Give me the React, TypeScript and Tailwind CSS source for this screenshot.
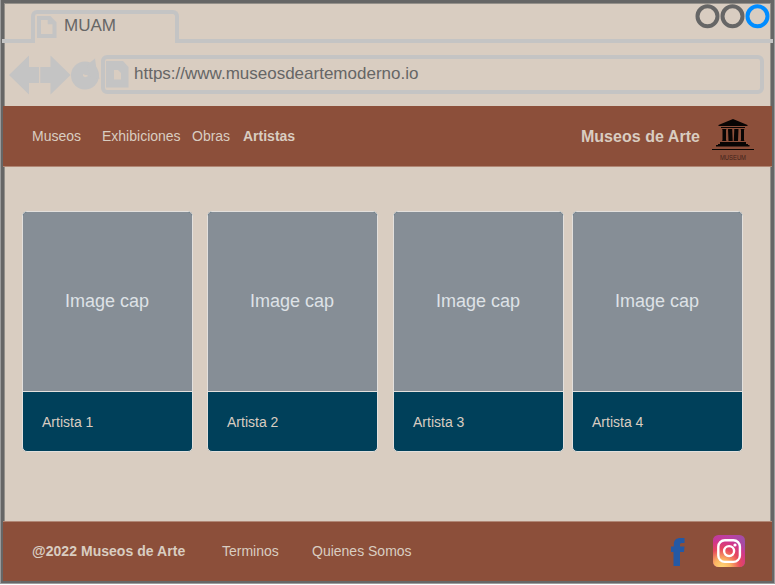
const artists = [
  { name: "Artista 1", gap: "" },
  { name: "Artista 2", gap: "ml-[14px]" },
  { name: "Artista 3", gap: "ml-[15px]" },
  { name: "Artista 4", gap: "ml-[8px]" },
];

function PageIcon() {
  return (
    <svg className="h-[24px] w-[20px] shrink-0" viewBox="0 0 20 24" fill="none" stroke="#c4c4c4" strokeWidth="4">
      <path d="M2 4H12.500L17.500 9V22H2Z" />
      <path d="M12 4V9H17" strokeWidth="2.500" />
    </svg>
  );
}

function NavArrows() {
  return (
    <svg className="h-[40px] w-[92px] shrink-0" viewBox="0 0 92 40" fill="#c4c4c4">
      <path d="M0 20 20 0.5V12H30V28H20V39.500Z" />
      <path d="M31.300 12H41.500V0.5L61.500 20 41.500 39.500V28H31.300Z" />
      <circle cx="76" cy="20.500" r="14" />
      <path d="M78 10 86 3.500 87.500 14 90.500 23.800 82 22Z" />
      <path d="M74 19V21L76 22.300 78.500 21.500V20H76.500Z" fill="#d9cdc1" />
    </svg>
  );
}

function Museum() {
  return (
    <svg className="h-[44px] w-[42px]" viewBox="0 0 42 44">
      <g fill="#080504">
        <path d="M21 1 35.500 7V8H6.500V7ZM9 9H33V10H9Z" />
        <path d="M10 11H14.500L14 12V22L14.500 23H10L10.500 22V12ZM16 11H20.200L20.700 23H16.500ZM22.300 11H26.500L26 23H21.800ZM28.500 11H32.500L32 12V22L32.500 23H28.500L29 22V12Z" />
        <path d="M8 24H34V26H36V27H37.500V28.500H4V27H6V26H8Z" />
        <path d="M0 31H42V32H0Z" />
      </g>
      <text x="21" y="41.800" textAnchor="middle" fontSize="6.800" textLength="26" lengthAdjust="spacingAndGlyphs" fill="#42241b" fontFamily="Liberation Sans, sans-serif">
        MUSEUM
      </text>
    </svg>
  );
}

function Facebook() {
  return (
    <svg className="h-[28px] w-[14px]" viewBox="0 0 14 28" fill="#2459a4">
      <path d="M2.500 28V14H0V8.500H2.800V6.500C2.800 2 5.500 0 9.500 0H13.500V5H11C9.400 5 9 5.800 9 7V8.500H13.500L13 14H9V28Z" />
    </svg>
  );
}

function Instagram() {
  return (
    <svg className="h-[32px] w-[32px]" viewBox="0 0 32 32">
      <defs>
        <linearGradient id="igBase" x1="0" y1="0" x2="1" y2="0.35">
          <stop offset="0" stopColor="#c23a9a" />
          <stop offset="0.5" stopColor="#b943a5" />
          <stop offset="1" stopColor="#9c50a5" />
        </linearGradient>
        <radialGradient id="igWarm" cx="0.28" cy="1.02" r="1.05">
          <stop offset="0" stopColor="#ffd878" />
          <stop offset="0.25" stopColor="#fbb461" />
          <stop offset="0.55" stopColor="#e7485c" />
          <stop offset="0.78" stopColor="#d63487" stopOpacity="0.85" />
          <stop offset="1" stopColor="#b83da5" stopOpacity="0" />
        </radialGradient>
      </defs>
      <rect width="32" height="32" rx="5.500" fill="url(#igBase)" />
      <rect width="32" height="32" rx="5.500" fill="url(#igWarm)" />
      <g fill="none" stroke="#fff" strokeWidth="2.400">
        <rect x="5.300" y="5.300" width="21.600" height="21.600" rx="6.500" />
        <circle cx="16.100" cy="16.100" r="5" />
      </g>
      <circle cx="22" cy="10" r="1.600" fill="#fff" />
    </svg>
  );
}

export default function App() {
  return (
    <div className="h-[585px] w-[775px] bg-white font-['Liberation_Sans',Arial,sans-serif]">
      <div className="h-[584px] border border-t-0 border-[#9b9b9b]">
        <div className="h-full border-3 border-b-2 border-[#666]">
          <div className="flex h-[578px] flex-col border border-b-0 border-[#94908a] bg-[#d9cdc1]">
            <div className="h-[102px] shrink-0 text-[17px] text-[#666]">
              <div className="-mx-[3px] flex h-[39px] items-end">
                <div className="h-1 w-[29px] bg-[#c4c4c4]" />
                <div className="flex h-[33px] w-[148px] rounded-t-[6px] border-4 border-b-0 border-[#c4c4c4] pl-[2px]">
                  <PageIcon />
                  <span className="ml-[7px] mt-[3px] leading-[18px]">MUAM</span>
                </div>
                <div className="flex h-full flex-1 flex-col items-end justify-between">
                  <svg className="mr-[3px] h-[25px] w-[76px]" viewBox="0 0 76 25" fill="none" strokeWidth="4">
                    <circle cx="13.500" cy="12.300" r="10" stroke="#666" />
                    <circle cx="38.500" cy="12.300" r="10" stroke="#666" />
                    <circle cx="63.500" cy="12.300" r="10" stroke="#008cff" />
                  </svg>
                  <div className="h-1 w-full bg-[#c4c4c4]" />
                </div>
              </div>
              <div className="mt-[12px] flex h-[40px] items-start pl-[4px]">
                <NavArrows />
                <div className="flex h-[39px] w-[663px] items-center rounded-[6px] border-4 border-[#c4c4c4]">
                  <svg className="h-[28px] w-[24px]" viewBox="0 0 24 28" fill="#c4c4c4">
                    <path fillRule="evenodd" d="M1 0H18L23.500 6V26.500H1ZM9 9V18.500H16V12L13 9Z" />
                  </svg>
                  <span className="-mt-[2px] ml-[5px] leading-[18px]">https://www.museosdeartemoderno.io</span>
                </div>
              </div>
            </div>

            <nav className="-mx-[2px] flex h-[61px] shrink-0 items-center border-b border-[#b18775] bg-[#8c4f3a] pl-[29px] text-[14px] text-[#d9cdc1]">
              <span className="w-[70px]">Museos</span>
              <span className="w-[90px]">Exhibiciones</span>
              <span className="w-[51px]">Obras</span>
              <span className="font-bold">Artistas</span>
              <span className="ml-auto mt-[2px] text-[16px] font-bold tracking-[0.04px]">Museos de Arte</span>
              <div className="ml-[12px] mr-[18px] mt-[7px]">
                <Museum />
              </div>
            </nav>

            <main className="flex flex-1 pl-[17px] pt-[44px]">
              {artists.map((a) => (
                <article
                  key={a.name}
                  className={`flex h-[241px] w-[171px] flex-col overflow-hidden rounded-[5px] border border-[#e3e0dd] bg-[#00405a] ${a.gap}`}
                >
                  <div className="flex h-[180px] items-center justify-center border-b border-[#e3e0dd] bg-[#868e96] pr-[1px] text-[18px] text-[#dee2e6]">
                    Image cap
                  </div>
                  <div className="flex flex-1 items-center pl-[19px] pt-[2px] text-[14px] text-[#d9cdc1]">{a.name}</div>
                </article>
              ))}
            </main>

            <footer className="-mx-[2px] flex h-[60px] shrink-0 items-center border-t border-[#b18775] bg-[#8c4f3a] pl-[29px] text-[14px] text-[#d9cdc1]">
              <span className="w-[190px] font-bold tracking-[0.04px]">@2022 Museos de Arte</span>
              <span className="w-[90px]">Terminos</span>
              <span>Quienes Somos</span>
              <div className="-mt-[1px] ml-auto mr-[27px] flex items-center gap-[28px]">
                <div className="mt-[2px]">
                  <Facebook />
                </div>
                <Instagram />
              </div>
            </footer>
          </div>
        </div>
      </div>
    </div>
  );
}
